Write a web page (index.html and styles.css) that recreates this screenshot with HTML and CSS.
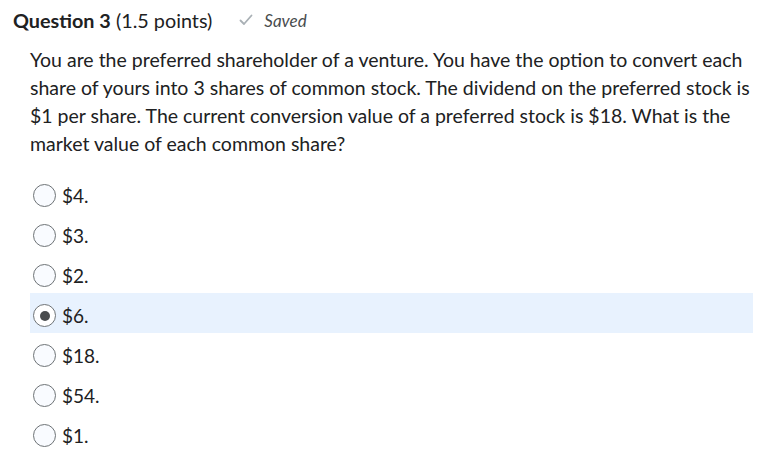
FILE: index.html
```html
<!DOCTYPE html>
<html>
<head>
<meta charset="utf-8">
<link rel="stylesheet" href="styles.css">
</head>
<body>
<div class="question">
  <div class="header">
    <h2 class="title"><strong>Question 3</strong> (1.5 points)</h2>
    <span class="saved">
      <svg class="check" width="14" height="12" viewBox="0 0 14 12"><path d="M1.5 6.5 L5 10 L12.5 1.5" fill="none" stroke="#a9b0b5" stroke-width="1.8" stroke-linecap="round" stroke-linejoin="round"/></svg>
      <em>Saved</em>
    </span>
  </div>
  <p class="prompt">You are the preferred shareholder of a venture. You have the option to convert each share of yours into 3 shares of common stock. The dividend on the preferred stock is $1 per share. The current conversion value of a preferred stock is $18. What is the market value of each common share?</p>
  <ul class="options">
    <li class="option"><span class="radio"></span><span class="label">$4.</span></li>
    <li class="option"><span class="radio"></span><span class="label">$3.</span></li>
    <li class="option"><span class="radio"></span><span class="label">$2.</span></li>
    <li class="option selected"><span class="radio checked"></span><span class="label">$6.</span></li>
    <li class="option"><span class="radio"></span><span class="label">$18.</span></li>
    <li class="option"><span class="radio"></span><span class="label">$54.</span></li>
    <li class="option"><span class="radio"></span><span class="label">$1.</span></li>
  </ul>
</div>
</body>
</html>
```
FILE: styles.css
```css
html, body {
  margin: 0;
  padding: 0;
  background: #ffffff;
}
body {
  font-family: Lato, "Open Sans", sans-serif;
  color: #202122;
}
.question {
  width: 778px;
}
.header {
  display: flex;
  align-items: center;
  padding: 9px 0 0 13px;
  height: 22px;
}
.title {
  margin: 0;
  font-size: 19.8px;
  font-weight: 400;
  line-height: 22px;
  color: #202122;
}
.title strong {
  font-weight: 700;
}
.saved {
  display: flex;
  align-items: center;
  margin-left: 27px;
  font-size: 17px;
  color: #494c4e;
}
.check {
  margin-right: 11px;
}
.prompt {
  margin: 15px 0 0 30px;
  width: 740px;
  font-size: 19.5px;
  line-height: 28px;
}
.options {
  list-style: none;
  margin: 15px 0 0 30px;
  padding: 0;
  width: 723px;
}
.option {
  box-sizing: border-box;
  display: flex;
  align-items: center;
  height: 40px;
  padding: 5px 0 0 3px;
  font-size: 19px;
}
.option.selected {
  background: #e8f2fe;
}
.radio {
  box-sizing: border-box;
  width: 23px;
  height: 23px;
  border: 1px solid #6e7376;
  border-radius: 50%;
  background: #f9fbff;
  margin-right: 6px;
  display: flex;
  align-items: center;
  justify-content: center;
  flex: none;
}
.radio.checked {
  background: #ffffff;
}
.radio.checked::after {
  content: "";
  width: 10px;
  height: 10px;
  border-radius: 50%;
  background: #494c4e;
}
.label {
  line-height: 22px;
}
```
